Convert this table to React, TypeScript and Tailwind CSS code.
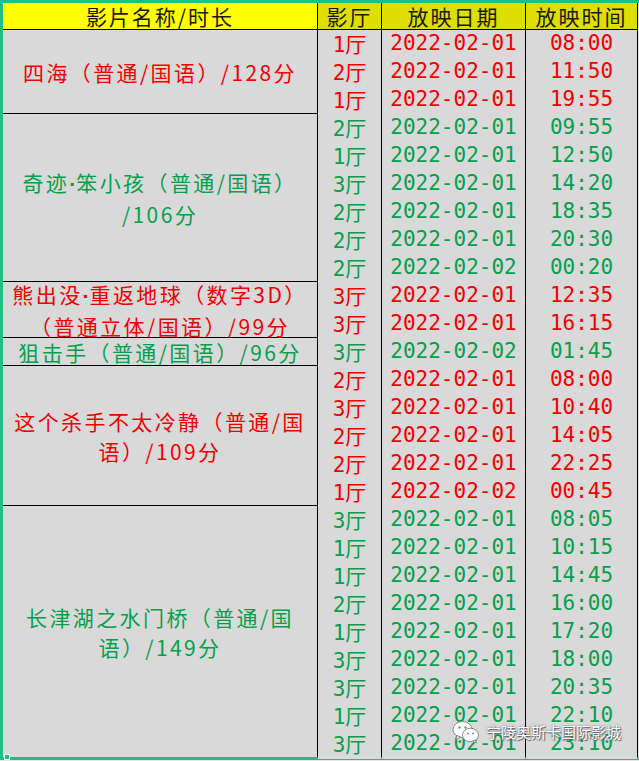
type Show = { hall: string; date: string; time: string };
type Movie = { lines: string[][]; color: string; shows: Show[] };

const RED = 'text-[#f20000]';
const GREEN = 'text-[#05a04c]';

const d1 = '2022-02-01';
const d2 = '2022-02-02';

// each line may hold a middle dot, which Excel draws narrow
const movies: Movie[] = [
  {
    lines: [['四海（普通/国语）/128分']],
    color: RED,
    shows: [
      { hall: '1', date: d1, time: '08:00' },
      { hall: '2', date: d1, time: '11:50' },
      { hall: '1', date: d1, time: '19:55' },
    ],
  },
  {
    lines: [['奇迹', '笨小孩（普通/国语）'], ['/106分']],
    color: GREEN,
    shows: [
      { hall: '2', date: d1, time: '09:55' },
      { hall: '1', date: d1, time: '12:50' },
      { hall: '3', date: d1, time: '14:20' },
      { hall: '2', date: d1, time: '18:35' },
      { hall: '2', date: d1, time: '20:30' },
      { hall: '2', date: d2, time: '00:20' },
    ],
  },
  {
    lines: [['熊出没', '重返地球（数字3D）'], ['（普通立体/国语）/99分']],
    color: RED,
    shows: [
      { hall: '3', date: d1, time: '12:35' },
      { hall: '3', date: d1, time: '16:15' },
    ],
  },
  {
    lines: [['狙击手（普通/国语）/96分']],
    color: GREEN,
    shows: [{ hall: '3', date: d2, time: '01:45' }],
  },
  {
    lines: [['这个杀手不太冷静（普通/国'], ['语）/109分']],
    color: RED,
    shows: [
      { hall: '2', date: d1, time: '08:00' },
      { hall: '3', date: d1, time: '10:40' },
      { hall: '2', date: d1, time: '14:05' },
      { hall: '2', date: d1, time: '22:25' },
      { hall: '1', date: d2, time: '00:45' },
    ],
  },
  {
    lines: [['长津湖之水门桥（普通/国'], ['语）/149分']],
    color: GREEN,
    shows: [
      { hall: '3', date: d1, time: '08:05' },
      { hall: '1', date: d1, time: '10:15' },
      { hall: '1', date: d1, time: '14:45' },
      { hall: '2', date: d1, time: '16:00' },
      { hall: '1', date: d1, time: '17:20' },
      { hall: '3', date: d1, time: '18:00' },
      { hall: '3', date: d1, time: '20:35' },
      { hall: '1', date: d1, time: '22:10' },
      { hall: '3', date: d1, time: '23:10' },
    ],
  },
];

// group height = rows * 27 + gaps
const groupHeight: Record<number, string> = {
  1: 'h-[27px]',
  2: 'h-[55px]',
  3: 'h-[83px]',
  5: 'h-[139px]',
  6: 'h-[167px]',
  9: 'h-[251px]',
};

const cjk = "font-['Noto_Sans_CJK_SC',sans-serif]";
const mono = "font-['DejaVu_Sans_Mono','Noto_Sans_CJK_SC',monospace]";

const WeChatIcon = () => (
  <svg width="28" height="24" viewBox="0 0 28 24">
    <ellipse cx="10.5" cy="9.5" rx="9.5" ry="8" fill="#fff" stroke="#888" strokeWidth="1" />
    <path d="M5 15.5 L4 19.5 L8.5 17 Z" fill="#fff" stroke="#888" strokeWidth="1" />
    <circle cx="7.5" cy="7.5" r="1.2" fill="#888" />
    <circle cx="13.5" cy="7.5" r="1.2" fill="#888" />
    <ellipse cx="18.5" cy="15" rx="8" ry="6.8" fill="#fff" stroke="#888" strokeWidth="1" />
    <path d="M23 20 L24.5 23 L20 21.3 Z" fill="#fff" stroke="#888" strokeWidth="1" />
    <circle cx="16" cy="13.5" r="1" fill="#888" />
    <circle cx="21" cy="13.5" r="1" fill="#888" />
  </svg>
);

const App = () => {
  return (
    <div className="relative w-[639px] h-[761px] bg-[#e6e6e6] overflow-hidden">
      <div className="h-[3px] bg-[#1fbf84]" />
      <div className="flex">
        <div className="w-[3px] bg-[#1fbf84]" />
        <div className="w-[635px] flex flex-col gap-px bg-black pr-px">
          <div className={`h-[26px] grid grid-cols-[314px_63px_143px_111px] gap-px text-[21px] leading-[26px] tracking-[2px] text-[#1a1a00] ${cjk}`}>
            <div className="bg-[#ffff00] text-center">影片名称/时长</div>
            <div className="bg-[#dede00] text-center">影厅</div>
            <div className="bg-[#dede00] text-center">放映日期</div>
            <div className="bg-[#dede00] text-center">放映时间</div>
          </div>
          {movies.map((m, i) => (
            <div key={i} className={`flex gap-px ${groupHeight[m.shows.length]} ${m.color}`}>
              <div className={`w-[314px] shrink-0 bg-[#d9d9d9] flex flex-col items-center justify-center text-[21px] leading-[30px] tracking-[2.4px] ${cjk}`}>
                {m.lines.map((parts, j) => (
                  <div key={j} className="whitespace-nowrap">
                    {parts.map((p, k) => (
                      <span key={k}>
                        {k > 0 && <span className="font-['Liberation_Sans'] font-bold tracking-normal">·</span>}
                        {p}
                      </span>
                    ))}
                  </div>
                ))}
              </div>
              <div className="w-[319px] flex flex-col gap-px">
                {m.shows.map((s, j) => (
                  <div key={j} className={`h-[27px] grid grid-cols-[63px_143px_111px] gap-px text-[21px] leading-[27px] ${mono}`}>
                    <div className="bg-[#d9d9d9] text-center">
                      {s.hall}
                      <span className={cjk}>厅</span>
                    </div>
                    <div className="bg-[#d9d9d9] text-center">{s.date}</div>
                    <div className="bg-[#d9d9d9] text-center">{s.time}</div>
                  </div>
                ))}
              </div>
            </div>
          ))}
        </div>
        <div className="w-px bg-[#e6e6e6]" />
      </div>
      <div className="h-[3px] bg-[#1fbf84]" />
      <div className="absolute left-[4px] bottom-[1px] w-[6px] h-[6px] bg-[#1fbf84] border border-white" />
      <div className="absolute right-[18px] bottom-[17px] flex items-center gap-[6px]">
        <WeChatIcon />
        <span className={`text-[15px] leading-[20px] text-white [text-shadow:0_0_2px_#555,1px_1px_1px_#666] ${cjk}`}>
          宁陵奥斯卡国际影城
        </span>
      </div>
    </div>
  );
};

export default App;
